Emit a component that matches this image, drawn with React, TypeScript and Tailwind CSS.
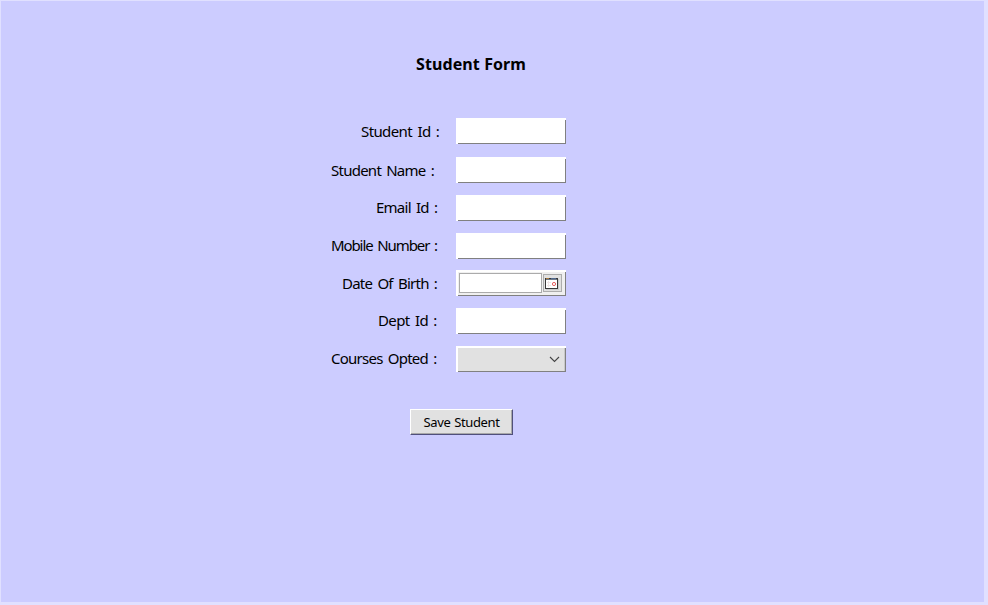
import React from 'react';

const fieldFrame = 'relative h-[26px] w-[110px] shrink-0 bg-white';

function Edges() {
  return (
    <>
      <span className="absolute bottom-0 left-[2px] right-0 h-px bg-[#808080]" />
      <span className="absolute bottom-0 right-0 top-[2px] w-px bg-[#808080]" />
    </>
  );
}

function TextField({ label }: { label: string }) {
  return (
    <div className={fieldFrame}>
      <input aria-label={label} className="block h-full w-full bg-transparent px-1 text-sm outline-none" />
      <Edges />
    </div>
  );
}

function DateField() {
  return (
    <div className={fieldFrame}>
      <div className="flex h-full pl-[2px] pt-[2px]">
        <div className="flex h-[23px] w-[107px] bg-[#f0f0f0] pl-[1px] pt-[1px]">
          <div className="h-[20px] w-[83px] border border-[#ababab] bg-white" />
          <div className="ml-[1px] mt-[1px] flex h-[18px] w-[19px] items-start border border-[#adadad] bg-[#e1e1e1] pl-[1px] pt-[3px]">
            <svg width="15" height="12" viewBox="0 0 15 12">
              <rect x="1" y="1" width="13" height="11" fill="#cacaca" />
              <rect x="0" y="0" width="13" height="11" fill="#383838" />
              <rect x="1" y="2" width="11" height="8" fill="#fff" />
              <rect x="1" y="0" width="3" height="1" fill="#a87c40" />
              <rect x="6" y="0" width="5" height="1" fill="#50688c" />
              <rect x="1" y="1" width="11" height="1" fill="#6f7988" />
              <path d="M2 4.5H6M2 7.5H6M3.5 3V9" stroke="#f0e6e6" />
              <circle cx="9" cy="6" r="1.6" fill="none" stroke="#e86060" />
            </svg>
          </div>
        </div>
      </div>
      <Edges />
    </div>
  );
}

function CourseField() {
  return (
    <div className={fieldFrame}>
      <div className="flex h-full items-center justify-end border-l-2 border-t-2 border-white bg-[#e1e1e1] pb-[2px] pr-[6px]">
        <svg width="11" height="7" viewBox="0 0 11 7" fill="none" stroke="#444" strokeWidth="1.1">
          <path d="M1 1 5.5 5.5 10 1" />
        </svg>
      </div>
      <span className="absolute bottom-px right-px top-[2px] w-px bg-[#c8c8c8]" />
      <Edges />
    </div>
  );
}

const rows = [
  { label: 'Student Id :', row: 'mb-[13px]', text: 'ml-[30px] w-[95px] leading-[27px] tracking-[-0.6px]', kind: 'text' },
  { label: 'Student Name :', row: 'mb-[12px]', text: 'w-[125px] leading-[27px] tracking-[-0.75px]', kind: 'text' },
  { label: 'Email Id :', row: 'mb-[12px]', text: 'ml-[45px] w-[80px] leading-[25px] tracking-[-0.75px]', kind: 'text' },
  { label: 'Mobile Number :', row: 'mb-[11px]', text: 'w-[125px] leading-[25px] tracking-[-1.1px]', kind: 'text' },
  { label: 'Date Of Birth :', row: 'mb-[12px]', text: 'ml-[11px] w-[114px] leading-[27px] tracking-[-0.75px]', kind: 'date' },
  { label: 'Dept Id :', row: 'mb-[12px]', text: 'ml-[47px] w-[78px] leading-[25px] tracking-[-0.6px]', kind: 'text' },
  { label: 'Courses Opted :', row: '', text: 'w-[125px] leading-[25px] tracking-[-0.75px]', kind: 'select' },
];

export default function App() {
  return (
    <div className="h-[605px] w-[988px] bg-[#e0e0ff] pl-px pt-px font-['Noto_Sans',sans-serif] text-black">
      <main className="flex h-[601px] w-[983px] flex-col bg-[#ccccff]">
        <h1 className="ml-[415px] mt-[51px] h-[24px] whitespace-nowrap text-[16px] font-bold leading-[24px] tracking-[0.1px]">Student Form</h1>
        <form className="ml-[330px] mt-[42px]" onSubmit={(e) => e.preventDefault()}>
          {rows.map(({ label, row, text, kind }) => (
            <div key={label} className={`flex h-[26px] ${row}`}>
              <label className={`shrink-0 whitespace-nowrap text-[15px] [word-spacing:2px] ${text}`}>{label}</label>
              {kind === 'text' && <TextField label={label} />}
              {kind === 'date' && <DateField />}
              {kind === 'select' && <CourseField />}
            </div>
          ))}
          <button className="ml-[79px] mt-[37px] block h-[26px] w-[103px] whitespace-nowrap border border-b-[#50507c] border-l-white border-r-[#50507c] border-t-white bg-[#e1e1e1] text-[13px] tracking-[-0.4px] shadow-[inset_-1px_-1px_0_#a8a8a8] leading-[24px] [word-spacing:1px]">
            Save Student
          </button>
        </form>
      </main>
    </div>
  );
}
